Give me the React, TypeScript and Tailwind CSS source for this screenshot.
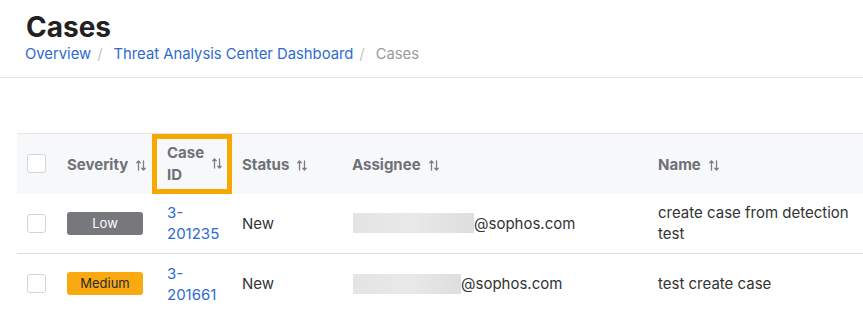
import React from "react"

// Small up/down arrow pair used next to sortable headers
function SortIcon() {
  return (
    <svg className="shrink-0" width="10" height="11" viewBox="0 0 10 11" fill="none" stroke="#7a7d83" strokeWidth="1.3" strokeLinecap="round" strokeLinejoin="round">
      <path d="M2.5 10V1M0.8 2.8L2.5 1L4.2 2.8" />
      <path d="M7.5 1V10M5.8 8.2L7.5 10L9.2 8.2" />
    </svg>
  )
}

function Checkbox() {
  return <div className="w-[19px] h-[19px] rounded-[3px] border border-[#d3d5d9] bg-white" />
}

type Row = {
  severity: "Low" | "Medium"
  id: string
  status: string
  blur: number
  name: string
}

const rows: Row[] = [
  { severity: "Low", id: "201235", status: "New", blur: 121, name: "create case from detection test" },
  { severity: "Medium", id: "201661", status: "New", blur: 108, name: "test create case" },
]

export default function App() {
  return (
    <div className="w-[863px] h-[310px] overflow-hidden bg-white text-[#333] font-['Inter',sans-serif]">
      {/* Page header */}
      <div className="pt-[10px] pb-[13px] px-[26px] border-b border-[#e3e3e3]">
        <h1 className="text-[28px] leading-[34px] font-bold text-[#222]">Cases</h1>
        <nav className="flex items-center text-[14.8px] leading-[20px]">
          <span className="text-[#2d6bd0] -ml-[1px]">Overview</span>
          <span className="text-[#c4c4c4] ml-[6px] mr-[11px]">/</span>
          <span className="text-[#2d6bd0]">Threat Analysis Center Dashboard</span>
          <span className="text-[#c4c4c4] ml-[6px] mr-[11px]">/</span>
          <span className="text-[#9a9a9a]">Cases</span>
        </nav>
      </div>

      <div className="pt-[55px] pl-[17px]">
        <table className="table-fixed border-collapse w-[861px] text-[15px]">
          <colgroup>
            <col className="w-[40px]" />
            <col className="w-[95px]" />
            <col className="w-[80px]" />
            <col className="w-[110px]" />
            <col className="w-[306px]" />
            <col className="w-[230px]" />
          </colgroup>
          <thead>
            <tr className="bg-[#f7f8fa] border-t border-[#e6e7ea] h-[60px] text-[#6e7177] text-[15px] font-semibold text-left">
              <th className="pl-[10px] align-middle">
                <Checkbox />
              </th>
              <th className="px-[10px] align-middle">
                <div className="flex items-center gap-[8px] pt-[3px]">
                  <span>Severity</span>
                  <SortIcon />
                </div>
              </th>
              <th className="relative pl-[15px] pr-[10px] align-middle">
                <div className="flex items-center justify-between">
                  <span className="leading-[22px]">
                    Case
                    <br />
                    ID
                  </span>
                  <SortIcon />
                </div>
                <div className="absolute inset-0 border-[5px] border-[#f5a800] pointer-events-none" />
              </th>
              <th className="px-[10px] align-middle">
                <div className="flex items-center gap-[8px] pt-[3px]">
                  <span>Status</span>
                  <SortIcon />
                </div>
              </th>
              <th className="px-[10px] align-middle">
                <div className="flex items-center gap-[8px] pt-[3px]">
                  <span>Assignee</span>
                  <SortIcon />
                </div>
              </th>
              <th className="px-[10px] align-middle">
                <div className="flex items-center gap-[8px] pt-[3px]">
                  <span>Name</span>
                  <SortIcon />
                </div>
              </th>
            </tr>
          </thead>
          <tbody>
            {rows.map((r) => (
              <tr key={r.id} className="border-b border-[#dcdce0] h-[60px] leading-[21px]">
                <td className="pl-[10px] align-middle">
                  <Checkbox />
                </td>
                <td className="px-[10px] align-middle">
                  <div
                    className={`w-[76px] h-[23px] rounded-[3px] flex items-center justify-center text-[13px] ${
                      r.severity === "Low" ? "bg-[#76787b] text-white" : "bg-[#f9aa10] text-[#2a2a2a]"
                    }`}
                  >
                    {r.severity}
                  </div>
                </td>
                <td className="pl-[15px] pr-[10px] align-middle text-[#2d6bd0]">
                  3-
                  <br />
                  {r.id}
                </td>
                <td className="px-[10px] align-middle">{r.status}</td>
                <td className="pl-[11px] pr-[10px] align-middle">
                  <div className="flex items-center">
                    <div
                      className="h-[20px] bg-gradient-to-r from-[#e4e4e4] via-[#e9e9e9] to-[#dedede]"
                      style={{ width: r.blur }}
                    />
                    <span>@sophos.com</span>
                  </div>
                </td>
                <td className="px-[10px] align-middle">{r.name}</td>
              </tr>
            ))}
          </tbody>
        </table>
      </div>
    </div>
  )
}
